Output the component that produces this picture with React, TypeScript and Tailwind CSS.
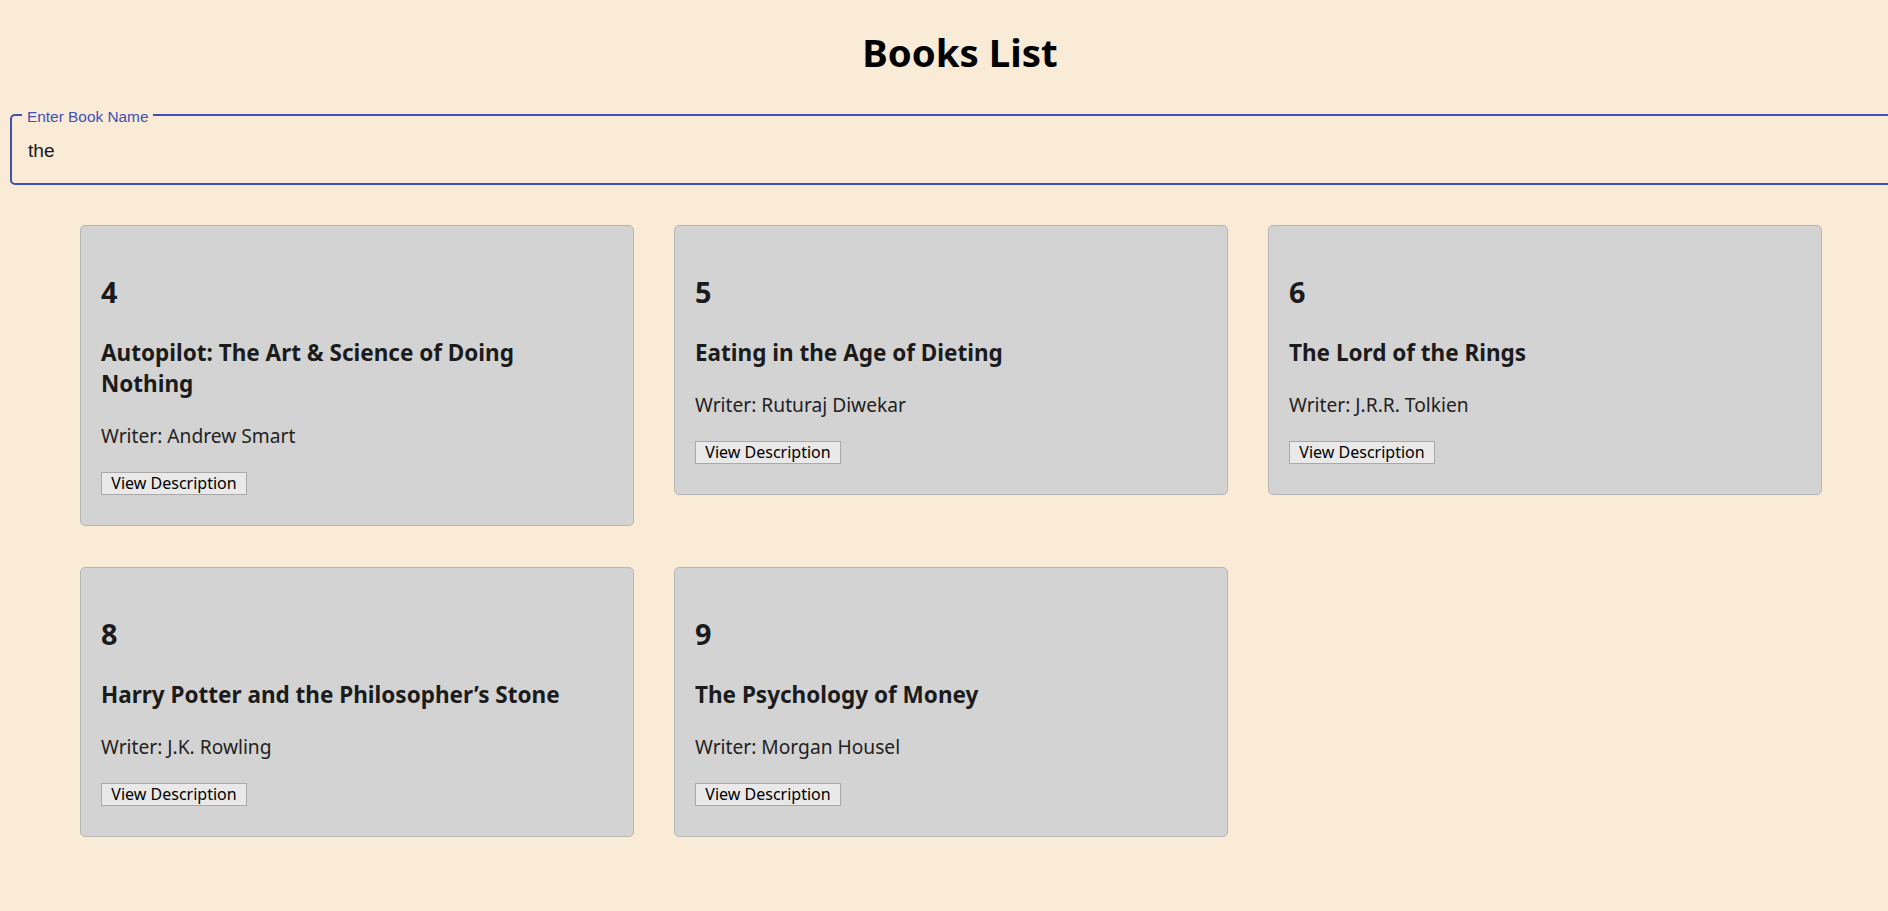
import React from "react";

type Book = { id: number; title: string; writer: string };

const books: Book[] = [
  { id: 4, title: "Autopilot: The Art & Science of Doing Nothing", writer: "Andrew Smart" },
  { id: 5, title: "Eating in the Age of Dieting", writer: "Ruturaj Diwekar" },
  { id: 6, title: "The Lord of the Rings", writer: "J.R.R. Tolkien" },
  { id: 8, title: "Harry Potter and the Philosopher\u2019s Stone", writer: "J.K. Rowling" },
  { id: 9, title: "The Psychology of Money", writer: "Morgan Housel" },
];

function BookCard({ book }: { book: Book }) {
  return (
    <div className="rounded-[5px] border border-[#b5b5b5] bg-[#d3d3d3] px-[20px] pt-[48px] pb-[30px] text-[#1b1b1b]">
      <h2 className="text-[28.8px] leading-[36px] font-bold">{book.id}</h2>
      <h3 className="mt-[27px] mr-[14px] text-[22.5px] leading-[31px] font-bold">{book.title}</h3>
      <p className="mt-[24px] text-[19.2px] leading-[26px] text-[#222]">Writer: {book.writer}</p>
      <button className="mt-[23px] block h-[23px] w-[146px] border border-[#a9a9a9] bg-[#e9e9e9] text-center text-[16px] leading-[21px] text-black">
        View Description
      </button>
    </div>
  );
}

export default function App() {
  return (
    <div
      className="min-h-screen w-full overflow-hidden bg-[#faebd7] pt-[26px] pb-[40px]"
      style={{ fontFamily: '"Noto Sans", sans-serif' }}
    >
      <h1 className="pl-[32px] text-center text-[38.4px] leading-[52px] font-bold text-black">Books List</h1>

      <div
        className="relative mt-[36px] ml-[10px] h-[71px] w-[1900px] rounded-[5px] border-2 border-[#3f51b5]"
        style={{ fontFamily: '"Liberation Sans", Arial, sans-serif' }}
      >
        <span className="absolute left-[10px] top-[-8.5px] bg-[#faebd7] px-[5px] text-[15.4px] leading-[18px] text-[#3f51b5]">
          Enter Book Name
        </span>
        <div className="pl-[16px] pt-[22.6px] text-[19.2px] leading-[24px] text-[#1a1a1a]">the</div>
      </div>

      <div className="mt-[40px] ml-[80px] grid grid-cols-[554px_554px_554px] items-start gap-x-[40px] gap-y-[41px]">
        {books.map((b) => (
          <BookCard key={b.id} book={b} />
        ))}
      </div>
    </div>
  );
}
